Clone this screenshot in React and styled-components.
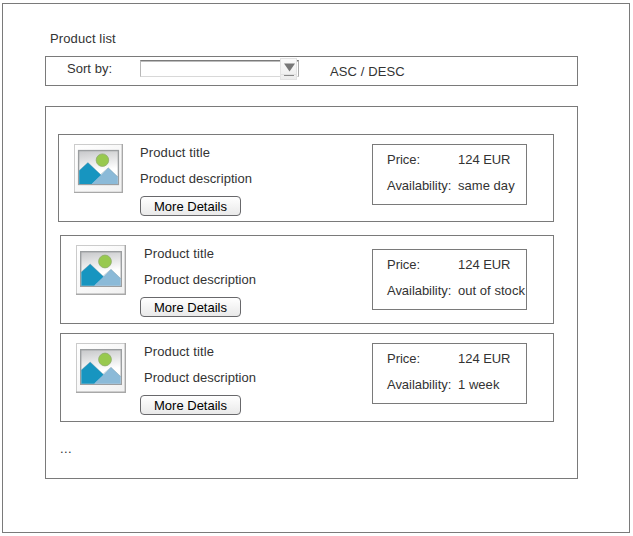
import React from "react";
import styled, { createGlobalStyle } from "styled-components";

const line = "#7a7a7a";

const GlobalStyle = createGlobalStyle`
  *, *::before, *::after { box-sizing: border-box; }
  body {
    margin: 0;
    background: #fff;
    color: #333;
    font: 13px/15px "Liberation Sans", Arial, sans-serif;
    letter-spacing: 0.04px;
  }
`;

const Page = styled.main`
  width: 628px;
  height: 530px;
  margin: 3px 0 0 2px;
  padding: 27px 51px 0 42px;
  border: 1px solid ${line};
  display: flow-root;
`;

const Heading = styled.h1`
  margin: 0 0 10px 5px;
  font: inherit;
  letter-spacing: 0.12px;
`;

const SortBar = styled.section`
  display: flex;
  align-items: flex-start;
  width: 533px;
  height: 30px;
  padding-left: 21px;
  border: 1px solid ${line};
`;

const SortLabel = styled.label`
  width: 73px;
  padding-top: 4px;
`;

const SelectField = styled.div`
  display: flex;
  justify-content: flex-end;
  width: 159px;
  height: 17px;
  margin-top: 3px;
  padding-right: 1px;
  border: 1px solid #d8d8d8;
  border-top-color: ${line};
  border-left-color: #b8b8b8;
  border-right-color: #aaa;
  box-shadow: inset 0 1px #bcbcbc;
`;

const SelectButton = styled.button`
  flex: none;
  width: 17px;
  height: 22px;
  margin: -3px 0 0;
  padding: 0;
  border: 1px solid #e2e2e2;
  background: linear-gradient(#fafafa, #ececec);
  line-height: 0;
`;

const Order = styled.span`
  padding: 7px 0 0 31px;
  letter-spacing: 0.1px;
`;

const List = styled.section`
  display: flex;
  flex-direction: column;
  width: 533px;
  height: 373px;
  margin-top: 20px;
  padding: 27px 23px 0 12px;
  border: 1px solid ${line};
`;

const Card = styled.article`
  display: flex;
  align-items: flex-start;
  flex: none;
  height: ${(p) => (p.$first ? 88 : 89)}px;
  margin: 0 0 ${(p) => p.$gap}px ${(p) => (p.$first ? 0 : 2)}px;
  padding: 9px 0 0 15px;
  border: 1px solid ${line};
`;

const Thumb = styled.svg`
  display: block;
  flex: none;
  width: ${(p) => p.$size}px;
  height: ${(p) => p.$size}px;
`;

const Summary = styled.div`
  display: flex;
  flex-direction: column;
  align-items: flex-start;
  width: ${(p) => (p.$first ? 249 : 246)}px;
  padding: 1px 0 0 ${(p) => (p.$first ? 17 : 14)}px;
`;

const SummaryLine = styled.div`
  height: 26px;
  padding-left: ${(p) => (p.$first ? 0 : 4)}px;
`;

const Title = styled(SummaryLine)`
  letter-spacing: 0.11px;
`;

const DetailsButton = styled.button`
  width: 101px;
  height: 20px;
  margin: -1px 0 0;
  padding: 1px 0 0;
  border: 1px solid #68686b;
  border-radius: 4px;
  background: linear-gradient(#fff, #f5f5f5 45%, #e9e9e9);
  color: #000;
  font: 13px/15px "Liberation Sans", Arial, sans-serif;
  letter-spacing: 0;
`;

const Info = styled.dl`
  display: grid;
  grid-template-columns: 71px auto;
  grid-auto-rows: 26px;
  flex: none;
  width: 155px;
  height: 61px;
  margin: ${(p) => p.$offset}px 0 0;
  padding: 7px 0 0 14px;
  border: 1px solid ${line};
  letter-spacing: -0.04px;
  white-space: nowrap;
`;

const Term = styled.dt``;

const Value = styled.dd`
  margin: 0;
`;

const Availability = styled(Value)`
  letter-spacing: 0.04px;
`;

const More = styled.div`
  padding-left: 2px;
  letter-spacing: 0.4px;
`;

const products = [
  { availability: "same day", gap: 13, offset: 0 },
  { availability: "out of stock", gap: 9, offset: 4 },
  { availability: "1 week", gap: 19, offset: 0 },
];

function Picture({ size, id }) {
  const sky = `sky-${id}`;
  const paper = `paper-${id}`;
  return (
    <Thumb $size={size} viewBox="0 0 50 50" aria-hidden="true">
      <defs>
        <linearGradient id={sky} x1="0" y1="0" x2="0.15" y2="1">
          <stop offset="0" stopColor="#c6c7c9" />
          <stop offset="0.65" stopColor="#fff" />
        </linearGradient>
        <linearGradient id={paper} x1="0" y1="0" x2="1" y2="1">
          <stop offset="0" stopColor="#fff" />
          <stop offset="1" stopColor="#f1f1f1" />
        </linearGradient>
      </defs>
      <rect x="0.5" y="0.5" width="49" height="49" fill={`url(#${paper})`} stroke="#cbcbcb" />
      <path d="M0 49.3H49.3V0" fill="none" stroke="#a8a8a8" strokeWidth="1.4" />
      <rect x="4.7" y="6.7" width="40.6" height="34.6" fill={`url(#${sky})`} stroke="#9b9ea0" strokeWidth="1.4" />
      <path d="M5.3 27L14.2 19L28 32L18.5 40.7H5.3Z" fill="#1795c0" />
      <path d="M18 40.7L35 24.3L44.7 33.5V40.7Z" fill="#8bbad8" />
      <path d="M5.3 27L14.2 19L27 31.2M27 31.2L35 24.3L44.7 33.5" fill="none" stroke="#688e9e" strokeOpacity="0.55" strokeWidth="0.7" />
      <circle cx="29" cy="16.5" r="6.4" fill="#98c94f" stroke="#8eab6b" strokeWidth="0.8" />
    </Thumb>
  );
}

function ProductCard({ product, index }) {
  const first = index === 0;
  return (
    <Card $first={first} $gap={product.gap}>
      <Picture size={first ? 49 : 50} id={index} />
      <Summary $first={first}>
        <Title $first={first}>Product title</Title>
        <SummaryLine $first={first}>Product description</SummaryLine>
        <DetailsButton type="button">More Details</DetailsButton>
      </Summary>
      <Info $offset={product.offset}>
        <Term>Price:</Term>
        <Value>124 EUR</Value>
        <Term>Availability:</Term>
        <Availability>{product.availability}</Availability>
      </Info>
    </Card>
  );
}

export default function App() {
  return (
    <>
      <GlobalStyle />
      <Page>
        <Heading>Product list</Heading>
        <SortBar>
          <SortLabel>Sort by:</SortLabel>
          <SelectField>
            <SelectButton type="button" aria-label="Choose sorting">
              <svg width="15" height="20" viewBox="0 0 15 20">
                <path d="M3 4.5H14L8.5 12.5Z" fill="#777" />
                <path d="M0 15.5H15" stroke="#e0e0e0" />
                <path d="M3 16.5H13" stroke="#888" />
              </svg>
            </SelectButton>
          </SelectField>
          <Order>ASC / DESC</Order>
        </SortBar>
        <List>
          {products.map((product, index) => (
            <ProductCard key={product.availability} product={product} index={index} />
          ))}
          <More>...</More>
        </List>
      </Page>
    </>
  );
}
